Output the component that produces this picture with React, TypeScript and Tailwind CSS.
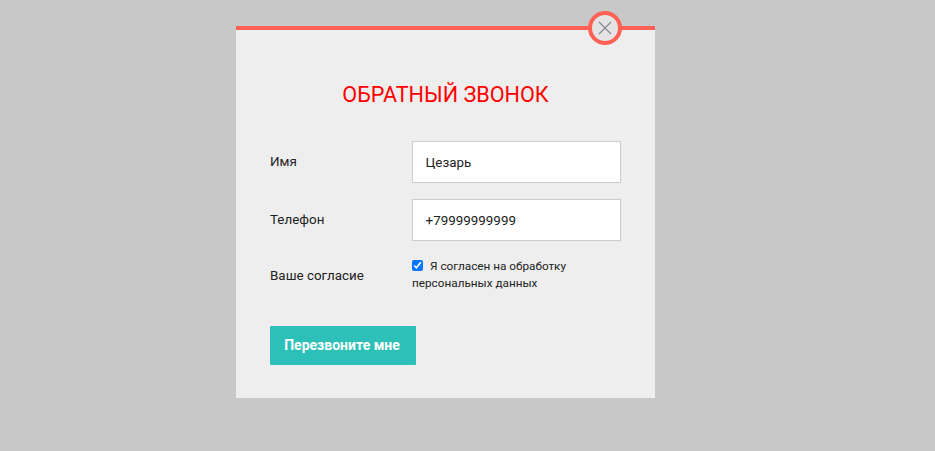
import React from 'react';

const CallbackForm = () => {
  return (
    <div className="relative ml-[236px] h-[372px] w-[419px] border-t-4 border-[#ff6155] bg-[#eeeeee] px-[34px] pt-[50px]">
      <button className="absolute left-[352px] top-[-19px] flex h-[34px] w-[34px] items-center justify-center rounded-full border-4 border-[#ff6155] bg-[#e4e4e4]">
        <svg width="14" height="14" viewBox="0 0 14 14" fill="none" stroke="#85858c" strokeWidth="1.1">
          <path d="M1 1l12 12M13 1L1 13" />
        </svg>
      </button>

      <h2 className="text-center text-[21.6px] leading-[30px] text-[#ff0000]">ОБРАТНЫЙ ЗВОНОК</h2>

      <div className="mt-[31px] flex items-center">
        <label className="w-[142px] text-[13.4px] text-[#222]">Имя</label>
        <input
          defaultValue="Цезарь"
          className="h-[42px] w-[210px] border border-[#cccccc] bg-white px-[13px] text-[13.4px] text-[#222]"
        />
      </div>

      <div className="mt-[16px] flex items-center">
        <label className="w-[142px] text-[13.4px] text-[#222]">Телефон</label>
        <input
          defaultValue="+79999999999"
          className="h-[42px] w-[210px] border border-[#cccccc] bg-white px-[13px] text-[13.4px] text-[#222]"
        />
      </div>

      <div className="mt-[16px] flex items-start">
        <label className="w-[142px] pt-[9px] text-[13.4px] leading-[20px] text-[#222]">Ваше согласие</label>
        <p className="w-[190px] pt-[1px] text-[11.75px] leading-[17px] text-[#222]">
          <input type="checkbox" defaultChecked className="mr-[7px] h-[11px] w-[11px] align-[-1px] accent-[#0075ff]" />
          Я согласен на обработку персональных данных
        </p>
      </div>

      <button className="mt-[34px] block h-[39px] w-[146px] rounded-[1px] bg-[#2dc0b8] pb-[2px] pr-[2px] text-sm font-bold text-white">
        Перезвоните мне
      </button>
    </div>
  );
};

export default function App() {
  return (
    <div className="h-[451px] w-[935px] overflow-hidden bg-[#c8c8c8] pt-[26px] font-['Roboto',sans-serif]">
      <CallbackForm />
    </div>
  );
}
